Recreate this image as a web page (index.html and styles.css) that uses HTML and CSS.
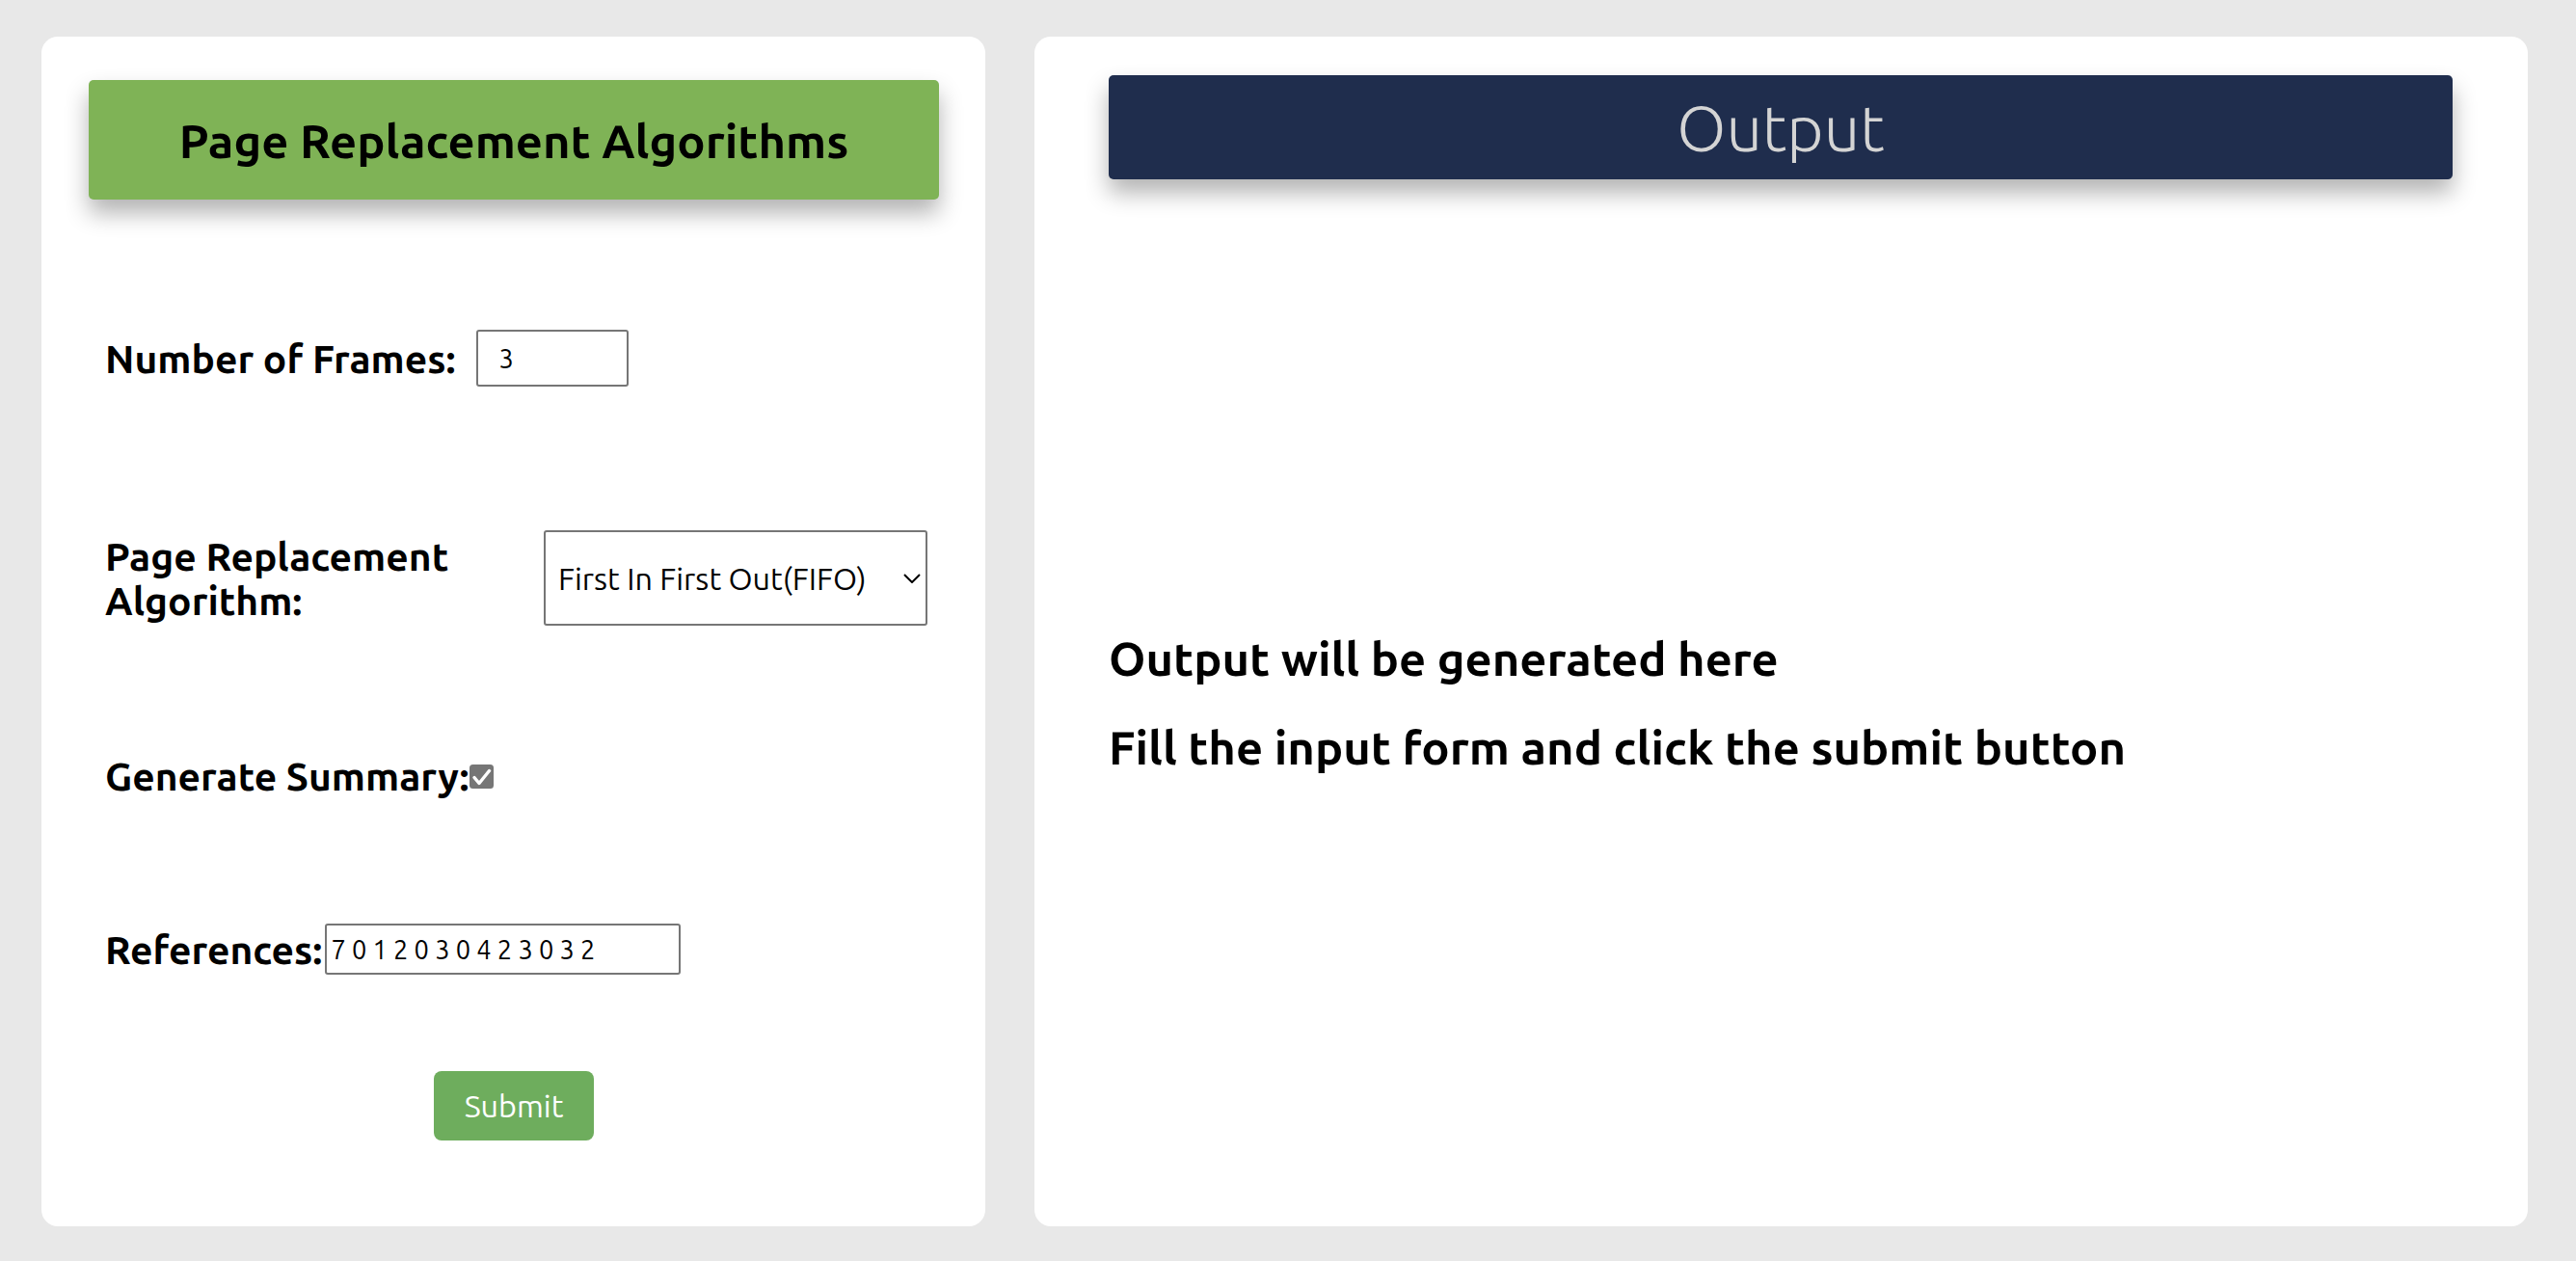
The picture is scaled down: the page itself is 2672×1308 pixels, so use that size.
FILE: index.html
```html
<!DOCTYPE html>
<html lang="en">
<head>
<meta charset="utf-8">
<title>Page Replacement Algorithms</title>
<link rel="stylesheet" href="styles.css">
</head>
<body>
<div class="page">
  <section class="card card-form">
    <div class="title-bar"><h1 class="title">Page Replacement Algorithms</h1></div>
    <form class="form">
      <div class="row row-frames">
        <label class="label" for="frames">Number of Frames:</label>
        <input id="frames" class="input input-frames" type="text" value="3">
      </div>
      <div class="row row-algo">
        <label class="label label-wrap" for="algo">Page Replacement Algorithm:</label>
        <div class="select-wrap">
          <select id="algo" class="select">
            <option>First In First Out(FIFO)</option>
          </select>
          <svg class="chevron" viewBox="0 0 18 10" aria-hidden="true"><path d="M1 1 L9 9 L17 1" fill="none" stroke="#000" stroke-width="2"/></svg>
        </div>
      </div>
      <div class="row row-summary">
        <label class="label" for="summary">Generate Summary:</label>
        <span class="check-box">
          <input id="summary" class="check-input" type="checkbox" checked>
          <svg class="check-icon" viewBox="0 0 25 25" aria-hidden="true"><rect x="0" y="0" width="25" height="25" rx="3.5" fill="#767676"/><path d="M5 13.5 L10 19.5 L20.5 6.5" fill="none" stroke="#fff" stroke-width="3.4" stroke-linecap="round" stroke-linejoin="round"/></svg>
        </span>
      </div>
      <div class="row row-refs">
        <label class="label" for="refs">References:</label>
        <input id="refs" class="input input-refs" type="text" value="7 0 1 2 0 3 0 4 2 3 0 3 2">
      </div>
      <button class="submit" type="button">Submit</button>
    </form>
  </section>
  <section class="card card-output">
    <div class="output-bar"><h2 class="output-title">Output</h2></div>
    <div class="output-body">
      <p class="output-line">Output will be generated here</p>
      <p class="output-line">Fill the input form and click the submit button</p>
    </div>
  </section>
</div>
</body>
</html>
```
FILE: styles.css
```css
html, body {
  margin: 0;
  padding: 0;
}

body {
  background: #e8e8e8;
  font-family: "Ubuntu", "Open Sans", "Noto Sans", sans-serif;
  color: #000;
}

.page {
  display: flex;
  gap: 51px;
  height: 1308px;
  padding: 38px 50px 36px 43px;
  box-sizing: border-box;
}

.card {
  background: #fff;
  border-radius: 17px;
  box-sizing: border-box;
  display: flex;
  flex-direction: column;
}

.card-form {
  width: 979px;
  flex: none;
  padding: 45px 48px 0 49px;
}

.card-output {
  flex: 1;
  padding: 40px 78px 0 77px;
}

.title-bar {
  height: 124px;
  background: #7fb356;
  border-radius: 5px;
  box-shadow: 0 14px 24px rgba(0, 0, 0, 0.3);
  display: flex;
  align-items: center;
  justify-content: center;
}

.title {
  margin: 0;
  font-size: 48.9px;
  font-weight: 700;
  color: #000;
}

.form {
  display: flex;
  flex-direction: column;
  padding: 0 12px 0 17px;
}

.row {
  display: flex;
  align-items: center;
}

.label {
  font-size: 40.8px;
  font-weight: 700;
  line-height: 46px;
}

.row-frames {
  margin-top: 135px;
  gap: 21px;
}

.row-algo {
  margin-top: 149px;
  justify-content: space-between;
}

.label-wrap {
  width: 430px;
}

.row-summary {
  margin-top: 133px;
  height: 45px;
  gap: 1px;
}

.row-refs {
  margin-top: 131px;
  gap: 3px;
}

.input {
  font-family: inherit;
  font-size: 27.2px;
  color: #000;
  background: #fff;
  border: 2px solid #767676;
  border-radius: 3px;
  box-sizing: border-box;
  margin: 0;
}

.input-frames {
  width: 158px;
  height: 59px;
  padding: 0 0 0 22px;
}

.input-refs {
  width: 369px;
  height: 53px;
  padding: 0 0 0 4px;
}

.select-wrap {
  position: relative;
  width: 398px;
  height: 99px;
}

.select {
  appearance: none;
  -webkit-appearance: none;
  width: 100%;
  height: 100%;
  box-sizing: border-box;
  margin: 0;
  border: 2px solid #767676;
  border-radius: 3px;
  background: #fff;
  color: #000;
  font-family: inherit;
  font-size: 32.3px;
  padding: 0 0 0 13px;
}

.chevron {
  position: absolute;
  right: 7px;
  top: 45px;
  width: 18px;
  height: 10px;
  pointer-events: none;
}

.check-box {
  position: relative;
  display: block;
  width: 25px;
  height: 25px;
  margin-top: 2px;
}

.check-input {
  position: absolute;
  inset: 0;
  width: 100%;
  height: 100%;
  margin: 0;
  opacity: 0;
}

.check-icon {
  display: block;
  width: 25px;
  height: 25px;
}

.submit {
  align-self: center;
  margin-top: 100px;
  margin-left: -5px;
  width: 166px;
  height: 72px;
  background: #6ead5d;
  color: #fff;
  border: none;
  border-radius: 8px;
  font-family: inherit;
  font-size: 32.3px;
  padding: 0;
}

.output-bar {
  height: 108px;
  background: #1f2d4d;
  border-radius: 5px;
  box-shadow: 0 14px 24px rgba(0, 0, 0, 0.3);
  display: flex;
  align-items: center;
  justify-content: center;
}

.output-title {
  margin: 0;
  font-size: 66.3px;
  font-weight: 300;
  color: #d4d4d4;
}

.output-body {
  flex: 1;
  display: flex;
  flex-direction: column;
  justify-content: center;
}

.output-line {
  margin: 0;
  font-size: 48.9px;
  font-weight: 700;
  line-height: 64px;
}

.output-line + .output-line {
  margin-top: 28px;
}
```
